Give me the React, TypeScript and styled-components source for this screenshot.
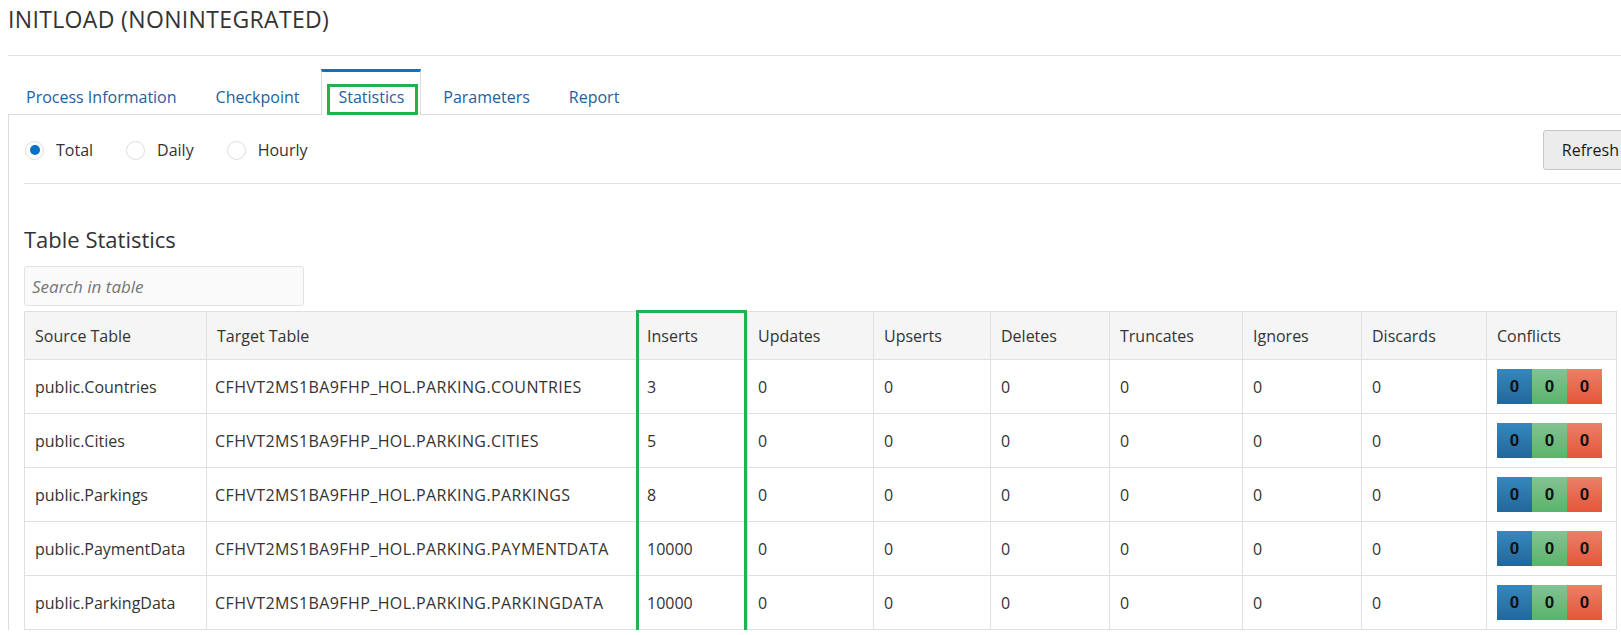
import styled, { createGlobalStyle } from "styled-components";

const GlobalStyle = createGlobalStyle`
  html, body {
    margin: 0;
    padding: 0;
    background: #ffffff;
    overflow: hidden;
  }
  body {
    font-family: "Open Sans", "Liberation Sans", sans-serif;
    color: #333333;
  }
`;

const TABS = ["Process Information", "Checkpoint", "Statistics", "Parameters", "Report"];
const ACTIVE_TAB = "Statistics";

const COLUMNS = [
  { label: "Source Table", width: 182 },
  { label: "Target Table", width: 430 },
  { label: "Inserts", width: 111 },
  { label: "Updates", width: 126 },
  { label: "Upserts", width: 117 },
  { label: "Deletes", width: 119 },
  { label: "Truncates", width: 133 },
  { label: "Ignores", width: 119 },
  { label: "Discards", width: 125 },
  { label: "Conflicts", width: 130 },
];

const ROWS = [
  { source: "public.Countries", target: "CFHVT2MS1BA9FHP_HOL.PARKING.COUNTRIES", inserts: 3 },
  { source: "public.Cities", target: "CFHVT2MS1BA9FHP_HOL.PARKING.CITIES", inserts: 5 },
  { source: "public.Parkings", target: "CFHVT2MS1BA9FHP_HOL.PARKING.PARKINGS", inserts: 8 },
  { source: "public.PaymentData", target: "CFHVT2MS1BA9FHP_HOL.PARKING.PAYMENTDATA", inserts: 10000 },
  { source: "public.ParkingData", target: "CFHVT2MS1BA9FHP_HOL.PARKING.PARKINGDATA", inserts: 10000 },
];

const TABLE_WIDTH = COLUMNS.reduce((sum, c) => sum + c.width, 0);
// the highlight sits over the Inserts column
const INSERTS_LEFT = COLUMNS[0].width + COLUMNS[1].width;

export default function App() {
  return (
    <>
      <GlobalStyle />
      <Page>
        <Title>INITLOAD (NONINTEGRATED)</Title>
        <Divider />
        <TabList>
          {TABS.map((t) => (
            <Tab key={t} $active={t === ACTIVE_TAB}>
              {t}
              {t === ACTIVE_TAB && <TabMark />}
            </Tab>
          ))}
        </TabList>
        <Panel>
          <Toolbar>
            <RadioGroup>
              <RadioItem>
                <RadioCircle $checked />
                <span>Total</span>
              </RadioItem>
              <RadioItem>
                <RadioCircle />
                <span>Daily</span>
              </RadioItem>
              <RadioItem>
                <RadioCircle />
                <span>Hourly</span>
              </RadioItem>
            </RadioGroup>
            <RefreshButton>Refresh</RefreshButton>
          </Toolbar>

          <SectionTitle>Table Statistics</SectionTitle>
          <SearchInput placeholder="Search in table" />

          <TableWrap>
            <Table>
              <colgroup>
                {COLUMNS.map((c) => (
                  <col key={c.label} style={{ width: c.width }} />
                ))}
              </colgroup>
              <thead>
                <tr>
                  {COLUMNS.map((c) => (
                    <Th key={c.label}>{c.label}</Th>
                  ))}
                </tr>
              </thead>
              <tbody>
                {ROWS.map((r) => (
                  <tr key={r.source}>
                    <Td>{r.source}</Td>
                    <Td $caps>{r.target}</Td>
                    <Td>{r.inserts}</Td>
                    <Td>0</Td>
                    <Td>0</Td>
                    <Td>0</Td>
                    <Td>0</Td>
                    <Td>0</Td>
                    <Td>0</Td>
                    <Td>
                      <Conflicts>
                        <ConflictCell $tone="blue">0</ConflictCell>
                        <ConflictCell $tone="green">0</ConflictCell>
                        <ConflictCell $tone="red">0</ConflictCell>
                      </Conflicts>
                    </Td>
                  </tr>
                ))}
              </tbody>
            </Table>
            <ColumnMark style={{ left: INSERTS_LEFT, width: COLUMNS[2].width }} />
          </TableWrap>
        </Panel>
      </Page>
    </>
  );
}

const Page = styled.div`
  display: flex;
  flex-direction: column;
  padding-left: 8px;
`;

const Title = styled.h1`
  margin: 0;
  padding-top: 3px;
  font-size: 23px;
  letter-spacing: 0.35px;
  line-height: 32px;
  font-weight: 400;
  color: #333333;
`;

const Divider = styled.div`
  margin-top: 20px;
  height: 1px;
  background: #e3e3e3;
`;

const TabList = styled.div`
  display: flex;
  gap: 5px;
  margin-top: 13px;
  margin-bottom: -1px;
  padding-left: 1px;
  position: relative;
  z-index: 1;
`;

const Tab = styled.div<{ $active?: boolean }>`
  position: relative;
  height: 46px;
  box-sizing: border-box;
  padding: 8px 16px 0;
  line-height: 34px;
  font-size: 16px;
  color: #1f609f;
  border-top: 3px solid ${(p) => (p.$active ? "#0572ce" : "transparent")};
  border-left: 1px solid ${(p) => (p.$active ? "#dcdcdc" : "transparent")};
  border-right: 1px solid ${(p) => (p.$active ? "#dcdcdc" : "transparent")};
  background: ${(p) => (p.$active ? "#ffffff" : "transparent")};
  white-space: nowrap;
`;

const TabMark = styled.span`
  position: absolute;
  left: 5px;
  right: 2px;
  top: 12px;
  bottom: 0;
  border: 3px solid #22b14c;
`;

const Panel = styled.div`
  width: 1630px;
  box-sizing: border-box;
  border-top: 1px solid #dcdcdc;
  border-left: 1px solid #dcdcdc;
  padding-left: 15px;
  display: flex;
  flex-direction: column;
  align-items: flex-start;
`;

const Toolbar = styled.div`
  align-self: stretch;
  display: flex;
  align-items: center;
  justify-content: space-between;
  padding: 15px 0 13px;
  border-bottom: 1px solid #e3e3e3;
`;

const RadioGroup = styled.div`
  display: flex;
  align-items: center;
  gap: 33px;
  padding-left: 1px;
`;

const RadioItem = styled.label`
  display: flex;
  align-items: center;
  gap: 12px;
  font-size: 16px;
  color: #333333;
`;

const RadioCircle = styled.span<{ $checked?: boolean }>`
  width: 19px;
  height: 19px;
  box-sizing: border-box;
  border-radius: 50%;
  border: 1px solid #dedede;
  background: #ffffff;
  display: flex;
  align-items: center;
  justify-content: center;

  &::after {
    content: "";
    width: 10px;
    height: 10px;
    border-radius: 50%;
    background: ${(p) => (p.$checked ? "#0a70c6" : "transparent")};
  }
`;

const RefreshButton = styled.button`
  height: 40px;
  padding: 0 18px;
  border: 1px solid #c6c6c6;
  border-radius: 3px;
  background: #ececec;
  font-family: "Open Sans", "Liberation Sans", sans-serif;
  font-size: 16px;
  color: #1a1a1a;
`;

const SectionTitle = styled.h2`
  margin: 40px 0 0;
  font-size: 22px;
  line-height: 30px;
  font-weight: 400;
  color: #333333;
`;

const SearchInput = styled.input`
  margin-top: 12px;
  width: 280px;
  height: 40px;
  box-sizing: border-box;
  padding: 0 7px;
  border: 1px solid #e2e2e2;
  border-radius: 3px;
  background: #fafafa;
  font-family: "Open Sans", "Liberation Sans", sans-serif;
  font-size: 17px;

  &::placeholder {
    color: #767676;
    font-style: italic;
  }
`;

const TableWrap = styled.div`
  position: relative;
  margin-top: 5px;
  width: ${TABLE_WIDTH}px;
`;

const Table = styled.table`
  width: 100%;
  table-layout: fixed;
  border-collapse: collapse;
  border: 1px solid #e0e0e0;
  font-size: 16px;
  color: #333333;
`;

const Th = styled.th`
  height: 47px;
  padding: 0 10px;
  text-align: left;
  font-weight: 400;
  background: #f5f5f5;
  border: 1px solid #e0e0e0;
  white-space: nowrap;
`;

const Td = styled.td<{ $caps?: boolean }>`
  height: 53px;
  padding: 0 10px 0 ${(p) => (p.$caps ? "8px" : "10px")};
  border: 1px solid #e0e0e0;
  white-space: nowrap;
  letter-spacing: ${(p) => (p.$caps ? "0.4px" : "normal")};
`;

const ColumnMark = styled.div`
  position: absolute;
  top: -1px;
  bottom: -3px;
  box-sizing: border-box;
  border: 3px solid #22b14c;
  pointer-events: none;
`;

const TONES = {
  blue: "linear-gradient(#3488be, #23679b)",
  green: "linear-gradient(#82c394, #5bb36b)",
  red: "linear-gradient(#eb8068, #e4563a)",
};

const Conflicts = styled.div`
  display: flex;
`;

const ConflictCell = styled.span<{ $tone: keyof typeof TONES }>`
  width: 35px;
  height: 35px;
  display: flex;
  align-items: center;
  justify-content: center;
  background: ${(p) => TONES[p.$tone]};
  font-family: "Liberation Sans", Arial, sans-serif;
  font-weight: 700;
  font-size: 17px;
  color: #111111;
`;
